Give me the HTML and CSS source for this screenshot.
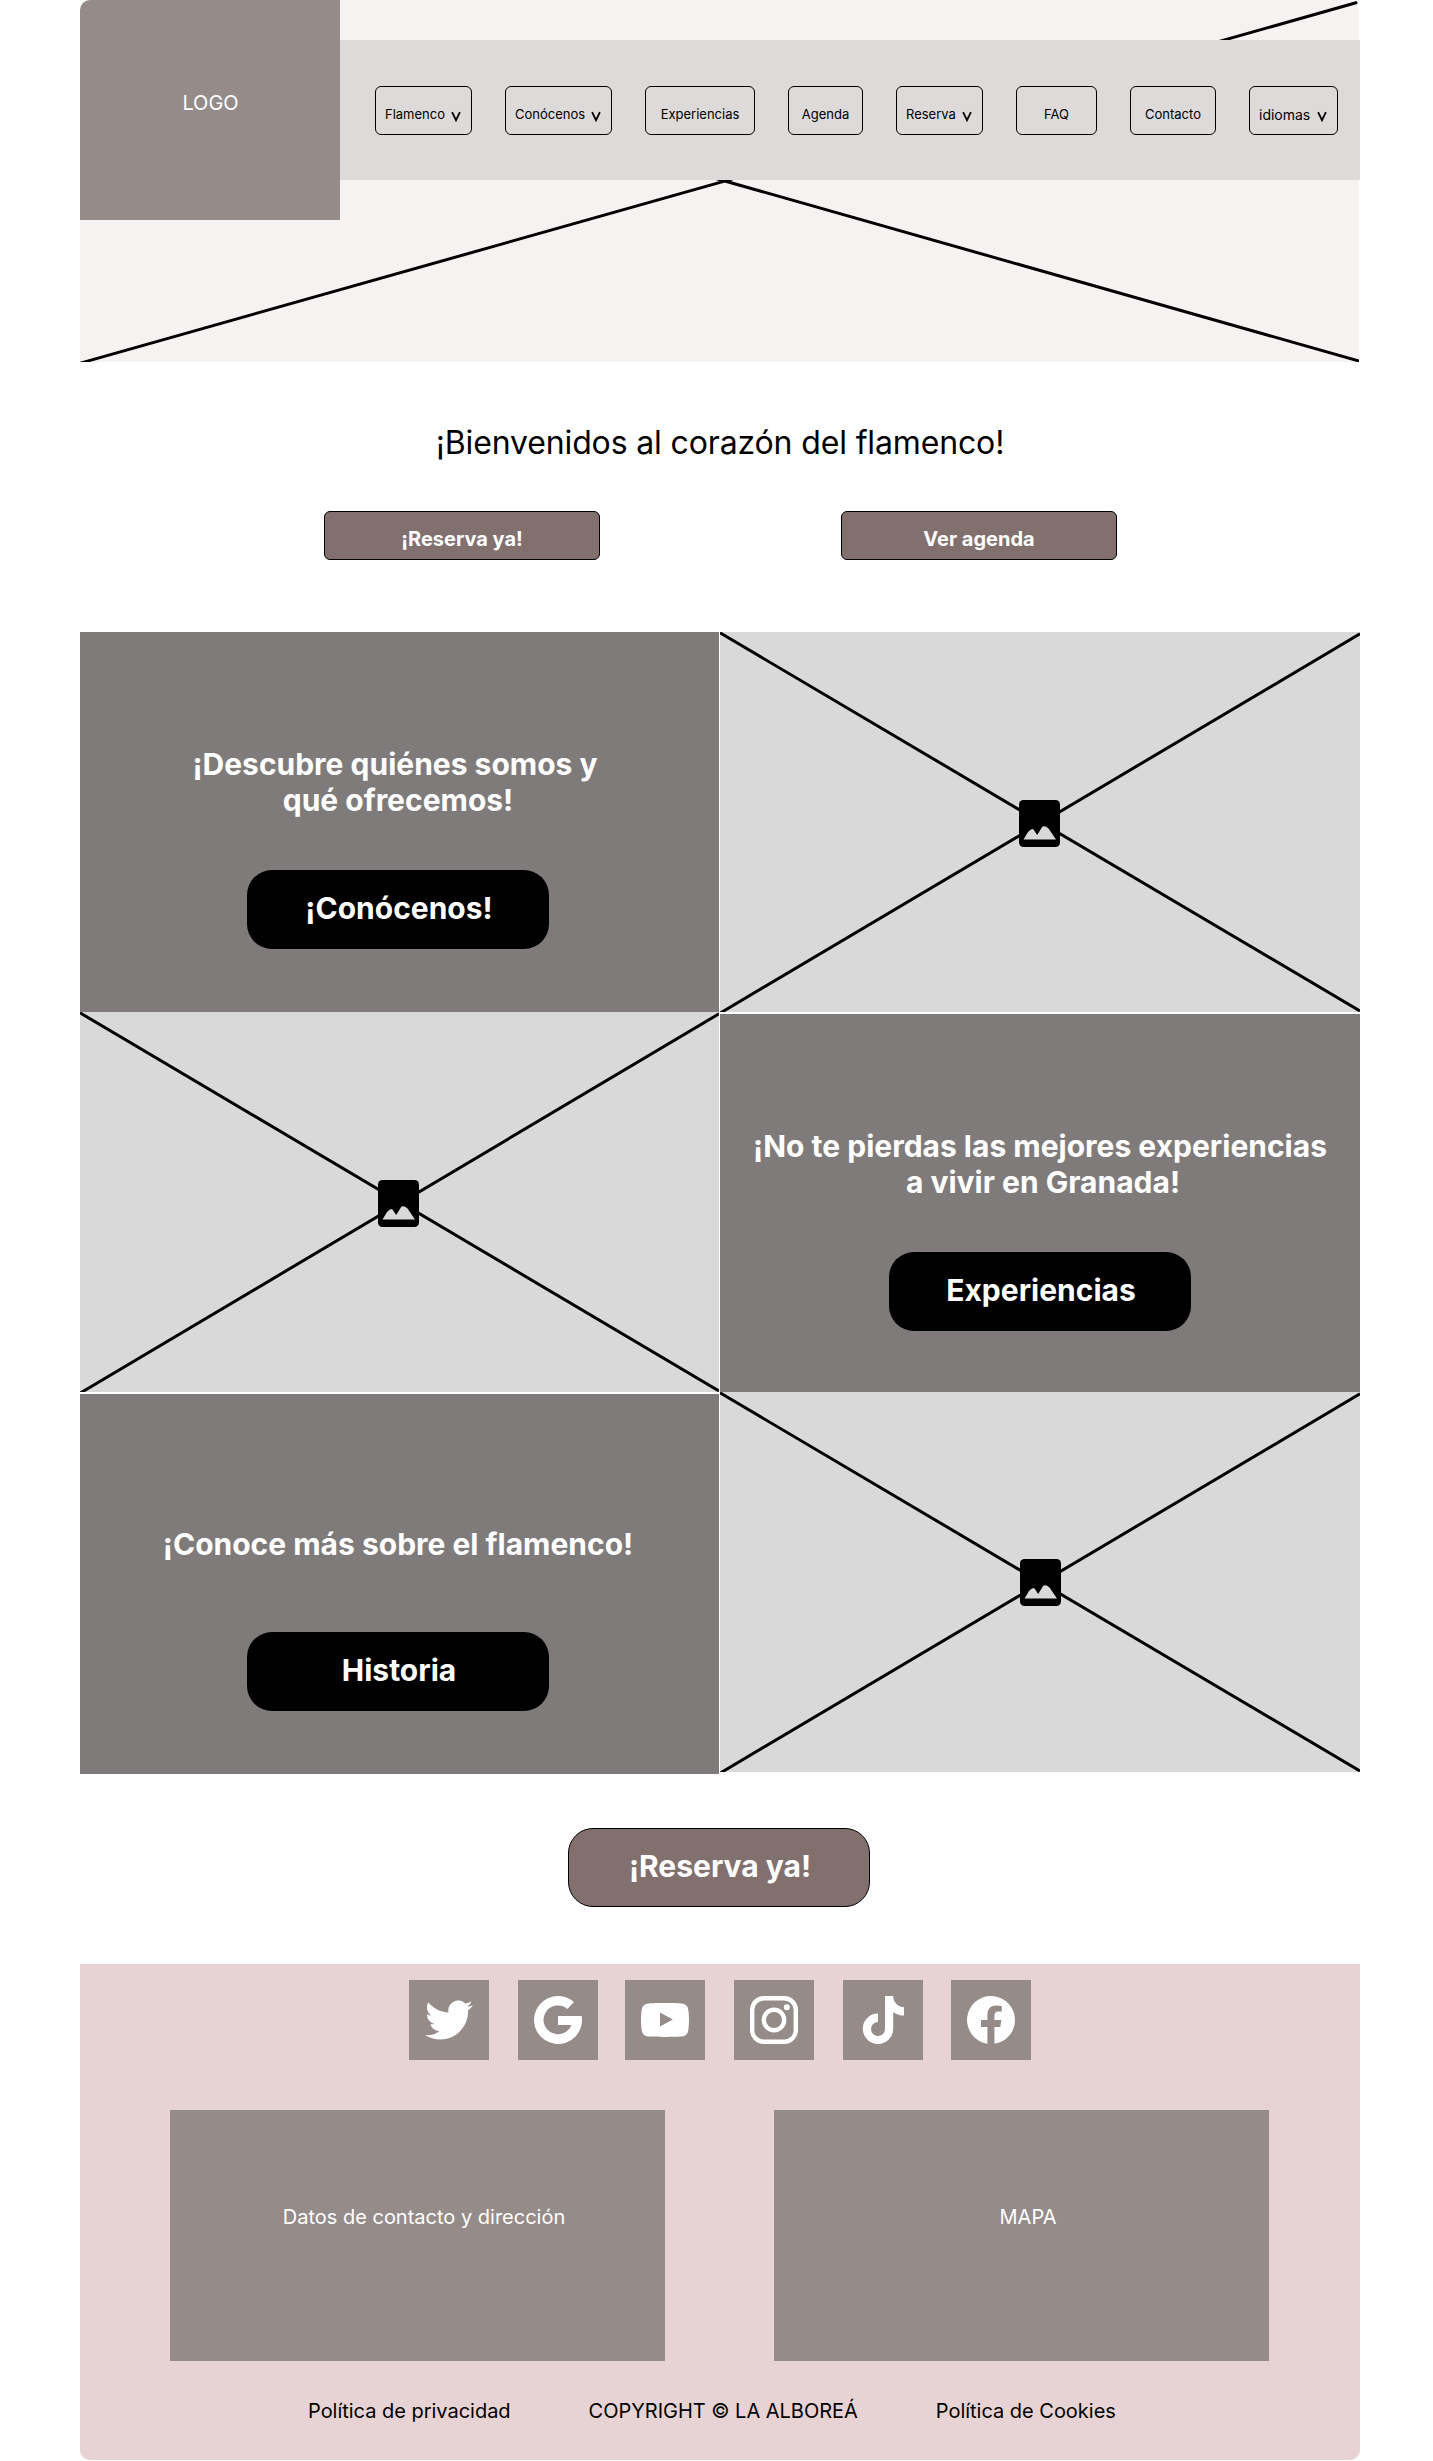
FILE: index.html
```html
<!DOCTYPE html>
<html lang="es">
<head>
<meta charset="utf-8">
<title>La Alboreá</title>
<link rel="stylesheet" href="styles.css">
</head>
<body>
<svg class="defs" width="0" height="0" aria-hidden="true">
  <symbol id="chevron" viewBox="0 0 10 11"><path d="M1.1 1.2L5 9.2L8.9 1.2" fill="none" stroke="#000" stroke-width="1.8"/></symbol>
  <symbol id="cross" viewBox="0 0 640 380" preserveAspectRatio="none"><path d="M0 .8L640 379M0 381.2L640 1.8" fill="none" stroke="#000" stroke-width="3"/></symbol>
  <symbol id="photo" viewBox="0 0 41 47"><rect width="41" height="47" rx="4.5"/><path d="M4.5 39.5L9 32Q13 28 14.5 29.5L18.2 35L22.8 27.5Q25 24.5 29.5 28.5L37 39.5z" fill="#d9d9d9"/></symbol>
</svg>
<div class="page">
  <header class="hero">
    <svg class="hero-lines" viewBox="0 0 1279 362"><path d="M0 363.2L1276 2.8M60 15L1280 361.3" fill="none" stroke="#000" stroke-width="3" stroke-linecap="round"/></svg>
    <div class="logo">LOGO</div>
    <nav class="nav">
      <a class="nav-item menu w97">Flamenco <svg><use href="#chevron"/></svg></a>
      <a class="nav-item menu w107">Conócenos <svg><use href="#chevron"/></svg></a>
      <a class="nav-item w110">Experiencias</a>
      <a class="nav-item w75">Agenda</a>
      <a class="nav-item menu w87">Reserva <svg><use href="#chevron"/></svg></a>
      <a class="nav-item w81">FAQ</a>
      <a class="nav-item w86">Contacto</a>
      <a class="nav-item menu w89">idiomas <svg><use href="#chevron"/></svg></a>
    </nav>
  </header>

  <section class="welcome">
    <h1>¡Bienvenidos al corazón del flamenco!</h1>
    <div class="actions">
      <a class="action">¡Reserva ya!</a>
      <a class="action">Ver agenda</a>
    </div>
  </section>

  <main class="blocks">
    <div class="column left">
      <section class="panel">
        <h2><span class="line first">¡Descubre quiénes somos y</span><span class="line">qué ofrecemos!</span></h2>
        <a class="button">¡Conócenos!</a>
      </section>
      <div class="picture"><svg class="cross"><use href="#cross"/></svg><svg class="photo"><use href="#photo"/></svg></div>
      <section class="panel single spaced">
        <h2>¡Conoce más sobre el flamenco!</h2>
        <a class="button">Historia</a>
      </section>
    </div>
    <div class="column">
      <div class="picture"><svg class="cross"><use href="#cross"/></svg><svg class="photo"><use href="#photo"/></svg></div>
      <section class="panel short spaced">
        <h2><span class="line">¡No te pierdas las mejores experiencias</span><span class="line last">a vivir en Granada!</span></h2>
        <a class="button">Experiencias</a>
      </section>
      <div class="picture"><svg class="cross"><use href="#cross"/></svg><svg class="photo raised"><use href="#photo"/></svg></div>
    </div>
  </main>

  <div class="booking"><a class="button outlined">¡Reserva ya!</a></div>

  <footer class="footer">
    <div class="socials">
      <a class="tile"><svg viewBox="0 0 24 24"><path d="M23.953 4.57a10 10 0 01-2.825.775 4.958 4.958 0 002.163-2.723c-.951.555-2.005.959-3.127 1.184a4.92 4.92 0 00-8.384 4.482C7.69 8.095 4.067 6.13 1.64 3.162a4.822 4.822 0 00-.666 2.475c0 1.71.87 3.213 2.188 4.096a4.904 4.904 0 01-2.228-.616v.06a4.923 4.923 0 003.946 4.827 4.996 4.996 0 01-2.212.085 4.936 4.936 0 004.604 3.417 9.867 9.867 0 01-6.102 2.105c-.39 0-.779-.023-1.17-.067a13.995 13.995 0 007.557 2.209c9.053 0 13.998-7.496 13.998-13.985 0-.21 0-.42-.015-.63A9.935 9.935 0 0024 4.59z"/></svg></a>
      <a class="tile google"><svg viewBox="0 0 24 24"><path d="M20 3.06A12 12 0 1 0 23.83 10H12V14.5H18.7A7.2 7.2 0 1 1 16.7 6.5z"/></svg></a>
      <a class="tile youtube"><svg viewBox="0 0 24 24"><path fill-rule="evenodd" d="M12 3.5C15 3.5 18.5 3.6 20 3.7C22.4 3.9 23.4 4.9 23.7 7.2C23.9 9 24 10.5 24 12S23.9 15 23.7 16.8C23.4 19.1 22.4 20.1 20 20.3C18.5 20.4 15 20.5 12 20.5S5.5 20.4 4 20.3C1.6 20.1.6 19.1.3 16.8C.1 15 0 13.5 0 12S.1 9 .3 7.2C.6 4.9 1.6 3.9 4 3.7C5.5 3.6 9 3.5 12 3.5zM9.5 8.3V15.2L15.9 11.7z"/></svg></a>
      <a class="tile instagram"><svg viewBox="0 0 24 24"><rect x="1.1" y="1.1" width="21.8" height="21.8" rx="5.8" fill="none" stroke="#fff" stroke-width="2.2"/><circle cx="12" cy="12" r="5.1" fill="none" stroke="#fff" stroke-width="2.2"/><circle cx="18.4" cy="5.6" r="1.5"/></svg></a>
      <a class="tile tiktok"><svg viewBox="0 0 24 24"><path d="M13 0h4.1c0 3 2.3 5.6 5.4 5.6v4.2c-2 0-3.9-.7-5.4-1.7v8.3A7.6 7.6 0 1 1 9.5 8.8v4.2a3.5 3.5 0 1 0 3.5 3.5z"/></svg></a>
      <a class="tile facebook"><svg viewBox="0 0 24 24"><path d="M24 12A12 12 0 1 0 10.2 23.86V15.5H7V12h3.2V9.4C10.2 6.3 12 4.7 14.8 4.7c1 0 1.9.1 2.6.3v2.8h-1.6c-1.5 0-2.1.8-2.1 2V12h3.5l-.6 3.5h-2.9v8.36A12 12 0 0 0 24 12z"/></svg></a>
    </div>
    <div class="info">
      <div class="box">Datos de contacto y dirección</div>
      <div class="box">MAPA</div>
    </div>
    <div class="legal">
      <span>Política de privacidad</span>
      <span>COPYRIGHT © LA ALBOREÁ</span>
      <span>Política de Cookies</span>
    </div>
  </footer>
</div>
</body>
</html>
```
FILE: styles.css
```css
* { box-sizing: border-box; }
body {
  margin: 0;
  background: #fff;
  color: #000;
  font-family: Inter, "Liberation Sans", sans-serif;
}
svg { display: block; }
.defs { position: absolute; }
h1, h2 { margin: 0; }

.page {
  width: 1280px;
  height: 2461px;
  margin-left: 80px;
}

.hero {
  position: relative;
  display: flex;
  align-items: flex-start;
  width: 1279px;
  height: 362px;
  background: #f6f2f1;
  border-radius: 10px 10px 0 0;
}
.hero-lines {
  position: absolute;
  inset: 0;
  width: 1279px;
  height: 362px;
}
.logo {
  position: relative;
  display: flex;
  flex: none;
  align-items: center;
  justify-content: center;
  width: 260px;
  height: 220px;
  padding: 0 0 14px 1px;
  background: #958b89;
  border-top-left-radius: 10px;
  color: #fff;
  font-size: 20px;
}
.nav {
  position: relative;
  display: flex;
  flex: none;
  gap: 33px;
  width: 1020px;
  height: 140px;
  margin-top: 40px;
  padding: 46px 0 0 35px;
  background: #dddad9;
}
.nav-item {
  display: flex;
  flex: none;
  align-items: center;
  justify-content: center;
  height: 49px;
  padding-top: 7px;
  border: 1px solid #000;
  border-radius: 6px;
  font-size: 13px;
}
.menu {
  justify-content: space-between;
  padding: 7px 10.5px 0 9px;
}
.menu svg {
  width: 10px;
  height: 11px;
  margin-top: 5px;
}
.w97 { width: 97px; }
.w107 { width: 107px; }
.w110 { width: 110px; }
.w75 { width: 75px; }
.w87 { width: 87px; }
.w81 { width: 81px; }
.w86 { width: 86px; }
.w89 { width: 89px; font-size: 14px; }

.welcome {
  display: flex;
  flex-direction: column;
  align-items: center;
  gap: 49px;
  height: 270px;
  padding-top: 61px;
}
.welcome h1 {
  font-size: 32px;
  font-weight: 400;
  line-height: 39px;
  letter-spacing: -0.14px;
}
.actions {
  display: flex;
  gap: 241px;
}
.action {
  display: flex;
  align-items: center;
  justify-content: center;
  width: 276px;
  height: 49px;
  padding: 6px 0 0 1px;
  background: #82706f;
  border: 1px solid #000;
  border-radius: 6px;
  color: #fff;
  font-size: 20px;
  font-weight: 700;
}

.blocks {
  display: grid;
  grid-template-columns: 639px 640px;
  gap: 1px;
  height: 1142px;
}
.panel {
  display: flex;
  flex-direction: column;
  align-items: center;
  gap: 52px;
  height: 380px;
  padding-top: 114px;
  background: #7f7b7a;
}
.left .panel { padding-right: 3px; }
.short { height: 378px; }
.spaced { margin-top: 2px; }
.single {
  gap: 70px;
  padding-top: 132px;
}
.panel h2 {
  color: #fff;
  font-size: 30px;
  font-weight: 700;
  line-height: 36px;
  text-align: center;
}
.line { display: block; }
.first { padding-right: 6px; }
.last { padding-left: 6px; }
.button {
  display: flex;
  align-items: center;
  justify-content: center;
  width: 302px;
  height: 79px;
  padding: 0 0 3px 2px;
  background: #000;
  border-radius: 25px;
  color: #fff;
  font-size: 30px;
  font-weight: 700;
}
.outlined {
  background: #82706f;
  border: 1px solid #000;
}
.picture {
  position: relative;
  height: 380px;
  background: #d9d9d9;
}
.cross {
  width: 100%;
  height: 380px;
}
.photo {
  position: absolute;
  top: 168px;
  left: 299px;
  width: 41px;
  height: 47px;
}
.left .photo { left: 298px; }
.raised { top: 167px; left: 300px; }

.booking {
  display: flex;
  height: 190px;
  padding: 54px 0 0 488px;
}

.footer {
  height: 496px;
  padding-top: 16px;
  background: #e7d3d3;
  border-radius: 0 0 10px 10px;
}
.socials {
  display: flex;
  padding-left: 329px;
}
.tile {
  display: flex;
  align-items: center;
  justify-content: center;
  width: 80px;
  height: 80px;
  background: #958b89;
}
.tile svg {
  width: 48px;
  height: 48px;
  fill: #fff;
}
.google, .instagram, .tiktok { margin-left: 29px; }
.youtube { margin-left: 27px; }
.facebook { margin-left: 28px; }
.info {
  display: flex;
  gap: 109px;
  padding: 50px 0 0 90px;
}
.box {
  display: flex;
  align-items: center;
  justify-content: center;
  width: 495px;
  height: 251px;
  padding: 0 0 38px 13px;
  background: #958b89;
  color: #fff;
  font-size: 20px;
}
.legal {
  display: flex;
  gap: 78px;
  padding: 38px 0 0 228px;
  font-size: 20px;
  line-height: 24px;
  letter-spacing: -0.02px;
}
```
